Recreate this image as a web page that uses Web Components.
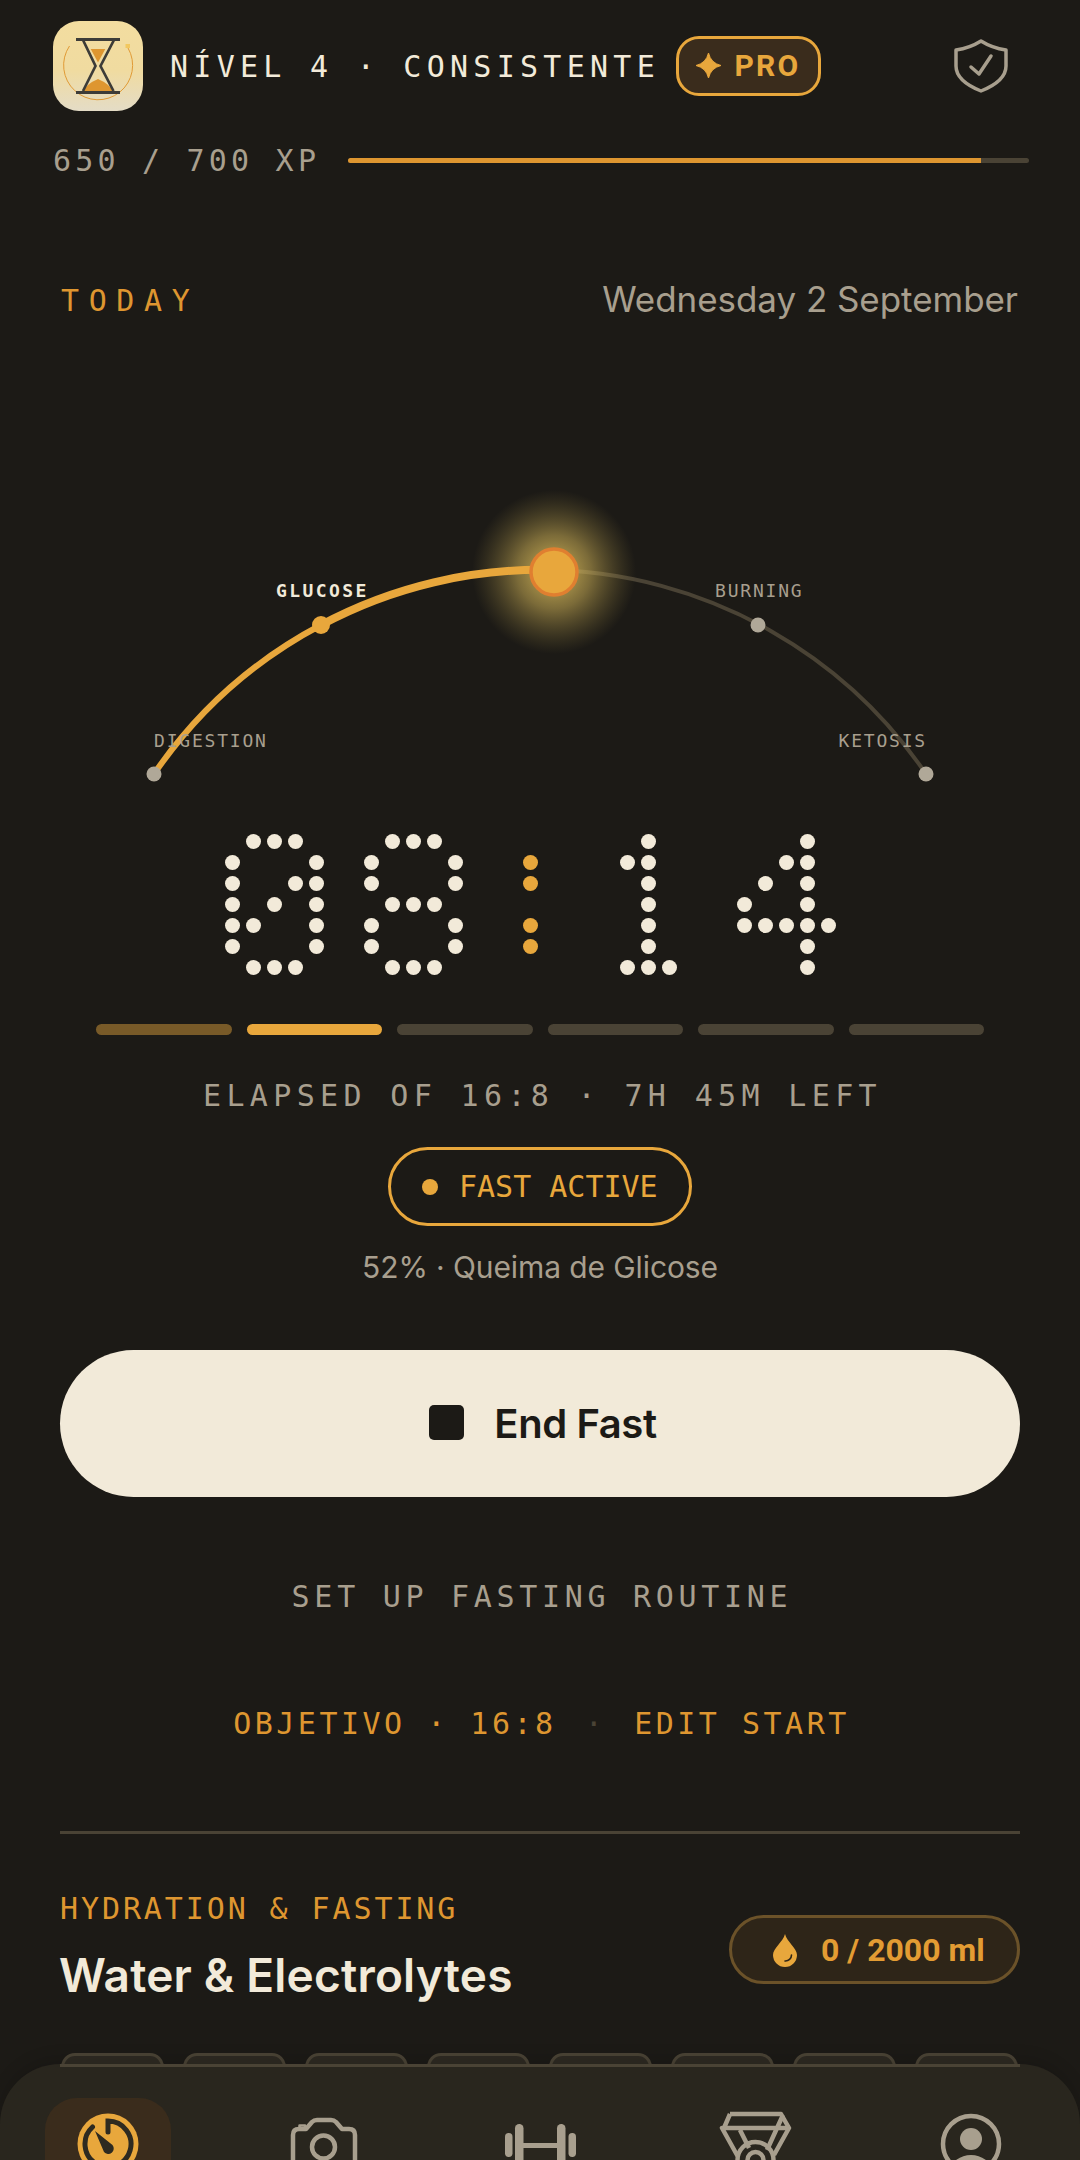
<!DOCTYPE html>
<html><head><meta charset="utf-8"><style>
html,body{margin:0;background:#1c1a16}
body{width:1080px;height:2160px;overflow:hidden;font-family:"DejaVu Sans Mono",monospace;color:#f2ead9}
app-shell{display:flex}
</style></head><body>
<app-shell>
  <level-header></level-header>
  <xp-bar></xp-bar>
  <today-row></today-row>
  <fast-arc></fast-arc>
  <dot-clock></dot-clock>
  <phase-bars></phase-bars>
  <fast-status></fast-status>
  <end-button>End Fast</end-button>
  <routine-links></routine-links>
  <hydration-card></hydration-card>
  <bottom-nav slot="nav"></bottom-nav>
</app-shell>
<script>
const def=(name,css,html)=>{customElements.define(name,class extends HTMLElement{
  constructor(){super();const s=this.attachShadow({mode:'open'});s.innerHTML=`<style>${css}</style>${html}`}
})};
const MONO='"DejaVu Sans Mono",monospace', SANS='"Inter","Noto Sans",sans-serif', ROB='"Roboto","Inter",sans-serif';

def('app-shell',`:host{display:flex;flex-direction:column;width:1080px;height:2160px;overflow:hidden}
.main{flex:1;min-height:0;overflow:hidden;display:flex;flex-direction:column}`,
`<div class="main"><slot></slot></div><slot name="nav"></slot>`);

def('level-header',`:host{display:flex;align-items:center;height:90px;margin:21px 0 0 53px;flex:none}
.logo{width:90px;height:90px;border-radius:26px;background:linear-gradient(180deg,#f3dda0 0%,#f0dba0 55%,#e4dcc6 100%);flex:none;display:block}
.t{font:400 30px ${MONO};letter-spacing:5.270px;color:#f2ead9;margin-left:27px;white-space:nowrap;width:506px;flex:none}
.pro{box-sizing:border-box;width:145px;height:60px;border:3px solid #e8a73c;border-radius:23px;background:#3a2c1c;display:flex;align-items:center;justify-content:center;gap:13px;color:#e8a73c;font:700 30px ${ROB};letter-spacing:2.300px;flex:none;margin-top:-1px}
.s{margin-left:auto;margin-right:72px;display:block;margin-top:-1px}`,
`<svg class="logo" viewBox="0 0 90 90">
<path d="M16.500 25 A34.500 34.500 0 1 0 75 27" fill="none" stroke="#e09a35" stroke-width="1"/>
<rect x="72.500" y="23" width="4.500" height="4" fill="#f2c860"/>
<path d="M37.700 28 H52.300 L45 41.500Z" fill="#de9630"/>
<path d="M30 71 Q33 63 45 58 Q57 63 60 71Z" fill="#de9630"/>
<path d="M30 19 L42.500 45 L30 70 M61 19 L47.500 45 L60.500 70" fill="none" stroke="#3d3c38" stroke-width="2.700"/>
<rect x="23" y="17" width="44" height="3" fill="#3d3c38"/>
<rect x="23" y="70" width="44" height="3" fill="#3d3c38"/>
</svg>
<span class="t">NÍVEL 4 · CONSISTENTE</span>
<span class="pro"><svg width="25" height="25" viewBox="0 0 26 26" style="flex:none"><path d="M13 0 Q15.500 10.500 26 13 Q15.500 15.500 13 26 Q10.500 15.500 0 13 Q10.500 10.500 13 0Z" fill="#e8a73c" stroke="#e8a73c" stroke-width="1"/></svg><span>PRO</span></span>
<svg class="s" width="54" height="54" viewBox="0 0 54 54" fill="none" stroke="#a89f8e" stroke-width="3.500" stroke-linejoin="round" stroke-linecap="round">
<path d="M27 2 Q38 9 52 11 V27 Q52 42 27 52 Q2 42 2 27 V11 Q16 9 27 2Z"/>
<path d="M17 28 L25 35 L37 17" stroke-width="3.500"/></svg>`);

def('xp-bar',`:host{display:flex;align-items:center;margin:34px 51px 0 53px;flex:none;height:30px}
.l{font:400 30px ${MONO};letter-spacing:4.200px;color:#a89f8e;white-space:nowrap;width:295px;flex:none}
.b{flex:1;height:5px;border-radius:3px;background:#4a4335;overflow:hidden}.f{height:100%;width:93%;background:#de9630}`,
`<span class="l">650 / 700 XP</span><div class="b"><div class="f"></div></div>`);

def('today-row',`:host{display:flex;justify-content:space-between;align-items:center;margin:101px 62px 0 61px;flex:none;height:48px}
.a{font:400 30px ${MONO};letter-spacing:9.600px;color:#de9630}.b{font:400 35px ${SANS};color:#a89f8e;margin-top:-2px;letter-spacing:-.05px}`,
`<span class="a">TODAY</span><span class="b">Wednesday 2 September</span>`);

def('fast-arc',`:host{display:block;flex:none;height:328px;margin-top:150px}svg{display:block;overflow:visible}text{font-family:${MONO};font-size:18px;letter-spacing:1.800px;fill:#a89f8e}`,
`<svg width="1080" height="328" viewBox="0 474 1080 328">
<defs><radialGradient id="g"><stop offset="0" stop-color="#e8c860" stop-opacity=".9"/><stop offset=".45" stop-color="#c9ad55" stop-opacity=".55"/><stop offset="1" stop-color="#8c7a3c" stop-opacity="0"/></radialGradient></defs>
<path d="M154 774 A467 467 0 0 1 926 774" fill="none" stroke="#4a4335" stroke-width="4"/>
<circle cx="554" cy="572" r="82" fill="url(#g)"/>
<path d="M154 774 A467 467 0 0 1 321 625" fill="none" stroke="#e8a73c" stroke-width="6"/>
<path d="M321 625 A467 467 0 0 1 554 570" fill="none" stroke="#e8a73c" stroke-width="8"/>
<circle cx="154" cy="774" r="7.500" fill="#b0a898"/><circle cx="926" cy="774" r="7.500" fill="#b0a898"/>
<circle cx="758" cy="625" r="7.500" fill="#b0a898"/><circle cx="321" cy="625" r="9" fill="#e8a73c"/>
<circle cx="554" cy="572" r="23" fill="#e8a73c" stroke="#e07f30" stroke-width="3.500"/>
<text x="154" y="747">DIGESTION</text>
<text x="276" y="597" style="font-weight:700;fill:#f2ead9;letter-spacing:2.400px">GLUCOSE</text>
<text x="715" y="597">BURNING</text>
<text x="927" y="747" text-anchor="end">KETOSIS</text>
</svg>`);

customElements.define('dot-clock',class extends HTMLElement{
  constructor(){super();const s=this.attachShadow({mode:'open'});
  const P=[['.###.','#...#','#..##','#.#.#','##..#','#...#','.###.'],
   ['.###.','#...#','#...#','.###.','#...#','#...#','.###.'],
   ['...','.#.','.#.','...','.#.','.#.','...'],
   ['..#..','.##..','..#..','..#..','..#..','..#..','.###.'],
   ['...#.','..##.','.#.#.','#..#.','#####','...#.','...#.']];
  let h='';[0,1,2,3,4].forEach(k=>{const p=P[k],col=k==2?'#e8a73c':'#f2ead9';
    h+=`<div class="d" style="grid-template-columns:repeat(${p[0].length},15px)">`+p.join('').split('').map(c=>`<i style="background:${c=='#'?col:'transparent'}"></i>`).join('')+'</div>'});
  s.innerHTML=`<style>:host{display:flex;justify-content:center;gap:39.500px;padding-right:19px;margin-top:32px;flex:none}
  .d{display:grid;gap:6px}i{width:15px;height:15px;border-radius:50%;display:block}</style>${h}`;}
});

def('phase-bars',`:host{display:flex;gap:15px;margin:49px 96px 0;flex:none}i{flex:1;height:11px;border-radius:5.500px;background:#4a4335}`,
`<i style="background:#785a28"></i><i style="background:#e8a73c"></i><i></i><i></i><i></i><i></i>`);

def('fast-status',`:host{display:flex;flex-direction:column;align-items:center;flex:none;margin-top:43px}
.e{font:400 30px ${MONO};letter-spacing:5.350px;color:#a89f8e;white-space:nowrap;height:36px;line-height:36px;margin-right:-5px}
.p{box-sizing:border-box;width:304px;height:79px;border:3px solid #e8a73c;border-radius:40px;margin-top:33px;display:flex;align-items:center;padding-left:31px;color:#e8a73c;font:400 30px ${MONO};gap:21px}
.p b{width:16px;height:16px;border-radius:50%;background:#e8a73c;flex:none}.p span{letter-spacing:0}
.q{font:400 30px ${SANS};color:#a89f8e;margin-top:19px;line-height:44px;letter-spacing:-.1px}`,
`<div class="e">ELAPSED OF 16:8 · 7H 45M LEFT</div><div class="p"><b></b><span>FAST ACTIVE</span></div><div class="q">52% · Queima de Glicose</div>`);

def('end-button',`:host{display:flex;align-items:center;justify-content:center;gap:30px;height:147px;margin:61px 60px 0;flex:none;background:#f2ead9;border-radius:74px;color:#1c1a16;font:600 40px ${SANS};letter-spacing:-.4px;padding-left:6px}
i{width:35px;height:35px;border-radius:5px;background:#1c1a16;display:block;margin-top:-2px}`,`<i></i><span><slot></slot></span>`);

def('routine-links',`:host{display:flex;flex-direction:column;align-items:center;flex:none;margin-top:80px}
.a{font:400 30px ${MONO};letter-spacing:4.700px;color:#a89f8e;line-height:40px;margin-right:-4px}
.b{font:400 30px ${MONO};letter-spacing:3.500px;color:#de9630;margin-top:87px;line-height:40px;white-space:pre;display:flex;gap:0;margin-right:-3px}
.b u{text-decoration:none;color:#4a4335}
.r{height:3px;background:#4a4335;width:960px;margin-top:87px}`,
`<div class="a">SET UP FASTING ROUTINE</div><div class="b"><span>OBJETIVO · 16:8</span><u style="margin:0 28px">·</u><span>EDIT START</span></div><div class="r"></div>`);

def('hydration-card',`:host{display:block;margin:0 60px;flex:none}
.top{display:flex;justify-content:space-between;margin-top:59px}
.h{font:400 30px ${MONO};letter-spacing:2.900px;color:#de9630;line-height:36px;margin-top:-2px}
.w{font:600 46px ${SANS};color:#f2ead9;margin:20px 0 0 -1px;line-height:56px;letter-spacing:.2px}
.pill{box-sizing:border-box;width:291px;height:69px;margin-top:22px;border:3px solid #6b5229;border-radius:35px;background:#2e2518;display:flex;align-items:center;padding-left:40px;gap:23px;color:#e39c33;font:700 32px ${ROB}}
.chips{display:flex;gap:19px;margin:50px 0 0 1px}.chips i{width:103px;height:60px;border:3px solid #4a4335;border-radius:14px;background:#2e2a22;box-sizing:border-box;flex:none}`,
`<div class="top"><div><div class="h">HYDRATION &amp; FASTING</div><div class="w">Water &amp; Electrolytes</div></div>
<div class="pill"><svg width="26" height="34" viewBox="0 0 26 34" style="flex:none"><path d="M13 1 C15 9 25 15 25 22 A12 12 0 0 1 1 22 C1 15 11 9 13 1Z" fill="#e8a73c"/><path d="M19.500 22 A6 6 0 0 1 13 28" fill="none" stroke="#2e2518" stroke-width="1.600" stroke-linecap="round"/></svg><span>0 / 2000 ml</span></div></div>
<div class="chips"><i></i><i></i><i></i><i></i><i></i><i></i><i></i><i></i></div>`);

def('bottom-nav',`:host{display:block;height:96px;flex:none;background:#29261e;border-radius:60px 60px 0 0;overflow:hidden;box-shadow:0 -6px 16px rgba(0,0,0,.12)}
svg{display:block}
.line{height:3px;background:#4a4335;margin:0 60px}
.row{display:flex}
.a{width:126px;margin-top:31px;height:90px;border-radius:32px 32px 0 0;background:#3a2c1c;flex:none;display:flex;justify-content:center}
.w{flex:none;width:216px;display:flex;justify-content:center}`,
`<div class="line"></div><div class="row">
<div class="w"><div class="a"><svg width="72" height="66" viewBox="72.500 2098 72 66"><circle cx="108.500" cy="2144" r="30.500" fill="#e8a73c"/><path d="M108.500 2132V2121A23 23 0 1 1 93 2127" fill="none" stroke="#2e2a20" stroke-width="5" stroke-linecap="round"/><path d="M95.500 2131 L113 2145 A5.500 5.500 0 0 1 104.500 2152Z" fill="#2e2a20"/></svg></div></div>
<div class="w"><svg width="216" height="93" viewBox="217 2067 216 93" fill="none" stroke="#a89f8e" stroke-width="4.500" stroke-linejoin="round" stroke-linecap="round"><path d="M294 2170 V2135 Q294 2129 300 2129 H307 L313 2122 Q315 2120 318 2120 H332 Q335 2120 337 2122 L343 2129 H350 Q356 2129 356 2135 V2170"/><path d="M300.500 2128 V2125.500 H306 V2128" stroke-width="2.500"/><circle cx="324.500" cy="2147" r="11.500"/></svg></div>
<div class="w"><svg width="216" height="93" viewBox="432 2067 216 93"><g fill="#a89f8e"><rect x="505" y="2133" width="7.500" height="24" rx="3.700"/><rect x="515" y="2124" width="8.500" height="42" rx="4.200"/><rect x="557" y="2124" width="8.500" height="42" rx="4.200"/><rect x="568.500" y="2133" width="7.500" height="24" rx="3.700"/><rect x="523" y="2143" width="34" height="5"/></g></svg></div>
<div class="w"><svg width="216" height="93" viewBox="649 2067 216 93" fill="none" stroke="#a89f8e" stroke-width="4.500" stroke-linejoin="round"><path d="M731 2114 H782 L790 2128 L775 2155 M738 2155 L723 2128Z"/><path d="M731 2114 L725 2128 H790 M784 2115 L768 2150 M741 2130 L750 2148"/><circle cx="756.500" cy="2160" r="18"/><circle cx="756.500" cy="2160" r="8"/></svg></div>
<div class="w"><svg width="216" height="93" viewBox="865 2067 216 93"><circle cx="972" cy="2144" r="28" fill="none" stroke="#a89f8e" stroke-width="4.500"/><circle cx="972" cy="2139" r="11" fill="#a89f8e"/><ellipse cx="972" cy="2170" rx="20" ry="15" fill="#a89f8e"/></svg></div>
</div>`);
</script>
</body></html>
